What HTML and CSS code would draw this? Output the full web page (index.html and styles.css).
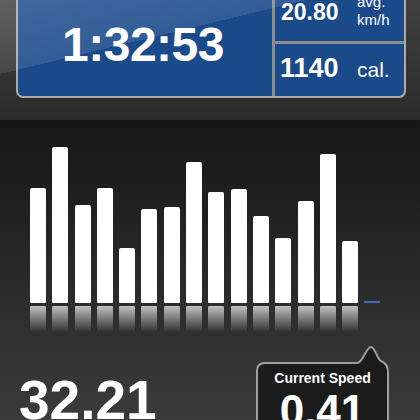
FILE: index.html
```html
<!DOCTYPE html>
<html>
<head>
<meta charset="utf-8">
<link rel="stylesheet" href="styles.css">
</head>
<body>
<div class="screen">
  <header class="header">
    <div class="panel">
      <div class="time-cell"><span class="time">1:32:53</span></div>
      <div class="side">
        <div class="stat stat-speed">
          <span class="num num-speed">20.80</span>
          <span class="unit unit-speed">avg.<br>km/h</span>
        </div>
        <div class="stat stat-cal">
          <span class="num num-cal">1140</span>
          <span class="unit unit-cal">cal.</span>
        </div>
      </div>
    </div>
  </header>
  <section class="chart-area">
    <div class="bars">
      <div class="bar" style="height:115px"></div>
      <div class="bar" style="height:156px"></div>
      <div class="bar" style="height:98px"></div>
      <div class="bar" style="height:115px"></div>
      <div class="bar" style="height:55px"></div>
      <div class="bar" style="height:94px"></div>
      <div class="bar" style="height:96px"></div>
      <div class="bar" style="height:141px"></div>
      <div class="bar" style="height:111px"></div>
      <div class="bar" style="height:114px"></div>
      <div class="bar" style="height:87px"></div>
      <div class="bar" style="height:65px"></div>
      <div class="bar" style="height:102px"></div>
      <div class="bar" style="height:149px"></div>
      <div class="bar" style="height:62px"></div>
      <div class="marker"></div>
    </div>
    <div class="reflections">
      <div class="refl"></div><div class="refl"></div><div class="refl"></div>
      <div class="refl"></div><div class="refl"></div><div class="refl"></div>
      <div class="refl"></div><div class="refl"></div><div class="refl"></div>
      <div class="refl"></div><div class="refl"></div><div class="refl"></div>
      <div class="refl"></div><div class="refl"></div><div class="refl"></div>
    </div>
    <div class="bottom">
      <div class="distance">32.21</div>
      <div class="bubble">
        <svg class="bubble-shape" viewBox="0 0 133 100" width="133" height="100">
          <path d="M1,100 V27 Q1,19 9,19 H101 C107,19 110,3 115,3 C119,3 121,15 125,17 C130,19 132,22 132,28 V100" fill="#1b1b1b" stroke="#9e9e9e" stroke-width="2"/>
        </svg>
        <div class="bubble-label">Current Speed</div>
        <div class="bubble-value">0.41</div>
      </div>
    </div>
  </section>
</div>
</body>
</html>
```
FILE: styles.css
```css
html, body {
  margin: 0;
  padding: 0;
}
body {
  width: 420px;
  height: 420px;
  overflow: hidden;
  background: #222;
  font-family: "Liberation Sans", Arial, sans-serif;
  color: #fff;
}
.screen {
  width: 420px;
  height: 420px;
  overflow: hidden;
}
.header {
  position: relative;
  height: 120px;
  box-sizing: border-box;
  padding: 0 14px 0 16px;
  background: linear-gradient(#404040, #2b2b2b);
}
.header::after {
  content: "";
  position: absolute;
  inset: 0;
  pointer-events: none;
  background: linear-gradient(166.4deg, rgba(255,255,255,0.17) 0, rgba(255,255,255,0.1) 72px, rgba(255,255,255,0) 72px);
}
.panel {
  display: grid;
  grid-template-columns: 254px 129px;
  column-gap: 3px;
  width: 390px;
  height: 98px;
  box-sizing: border-box;
  background: #8c8c8c;
  border: 2px solid #ababab;
  border-top: 0;
  border-radius: 0 0 7px 7px;
  overflow: hidden;
}
.time-cell {
  background: #1b4a8b;
  display: flex;
  align-items: center;
  justify-content: center;
  padding: 0 4px 7px 0;
}
.time {
  font-size: 48px;
  font-weight: bold;
  line-height: 48px;
  letter-spacing: -0.5px;
}
.side {
  display: grid;
  grid-template-rows: 41px 52px;
  row-gap: 3px;
}
.stat {
  background: #1b4a8b;
  display: grid;
  grid-template-columns: 82px auto;
}
.stat-speed {
  align-items: start;
}
.num {
  font-weight: bold;
}
.num-speed {
  font-size: 23px;
  line-height: 23px;
  padding-left: 6px;
  margin-top: 1px;
}
.unit-speed {
  font-size: 15px;
  line-height: 18px;
  margin-top: -7px;
}
.stat-cal {
  align-items: baseline;
  padding-top: 11px;
}
.num-cal {
  font-size: 27px;
  line-height: 27px;
  padding-left: 5px;
}
.unit-cal {
  font-size: 21px;
  line-height: 27px;
}
.chart-area {
  height: 300px;
  overflow: hidden;
  background: linear-gradient(#161616, #3b3b3b);
}
.bars {
  display: flex;
  align-items: flex-end;
  gap: 6.3px;
  height: 183px;
  margin-left: 30px;
}
.bar {
  width: 16px;
  background: #fff;
  border-radius: 2px 2px 1px 1px;
}
.marker {
  width: 16px;
  height: 2px;
  background: #3d6db3;
}
.reflections {
  display: flex;
  gap: 6.3px;
  margin: 3px 0 0 30px;
}
.refl {
  width: 16px;
  height: 26px;
  border-radius: 1px;
  background: linear-gradient(rgba(255,255,255,0.7), rgba(255,255,255,0));
}
.bottom {
  display: flex;
  justify-content: space-between;
  align-items: flex-start;
  margin-top: 30px;
  padding: 0 31px 0 19px;
}
.distance {
  font-size: 55px;
  font-weight: bold;
  line-height: 55px;
  margin-top: 11px;
}
.bubble {
  position: relative;
  width: 133px;
  height: 80px;
  box-sizing: border-box;
  padding-top: 8px;
  text-align: center;
}
.bubble-shape {
  position: absolute;
  left: 0;
  top: -18px;
}
.bubble-label, .bubble-value {
  position: relative;
  font-weight: bold;
}
.bubble-label {
  font-size: 14px;
  line-height: 16px;
}
.bubble-value {
  font-size: 44px;
  line-height: 44px;
  margin-top: 3px;
}
```
